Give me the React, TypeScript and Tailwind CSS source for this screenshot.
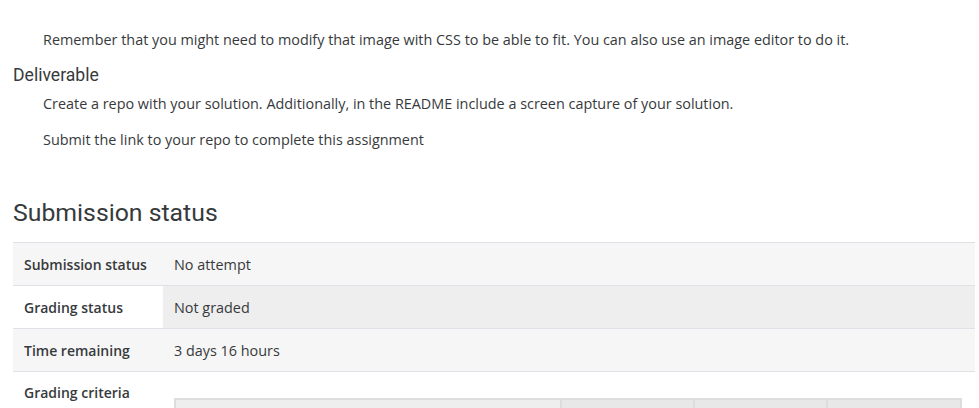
const rows = [
  { label: "Submission status", value: "No attempt", labelBg: "bg-[#f6f6f6]", valueBg: "bg-[#f6f6f6]" },
  { label: "Grading status", value: "Not graded", labelBg: "bg-white", valueBg: "bg-[#eeeeee]" },
  { label: "Time remaining", value: "3 days 16 hours", labelBg: "bg-[#f6f6f6]", valueBg: "bg-[#f6f6f6]" },
];

export default function App() {
  return (
    <div className="w-[979px] h-[408px] overflow-hidden bg-white text-[#373a3c] font-['Open_Sans',sans-serif] pl-[13px]">
      <div className="pt-[29px] pl-[30px] text-[14.4px] leading-[22px]">
        Remember that you might need to modify that image with CSS to be able to fit. You can also use an image editor to do it.
      </div>
      <h5 className="mt-[12px] font-['Roboto',sans-serif] text-[17.6px] leading-[24px] text-[#373a3c]">
        Deliverable
      </h5>
      <div className="pl-[30px] text-[14.4px] leading-[22px]">
        <p className="mt-[6px]">
          Create a repo with your solution. Additionally, in the README include a screen capture of your solution.
        </p>
        <p className="mt-[14px]">Submit the link to your repo to complete this assignment</p>
      </div>
      <h3 className="mt-[46px] font-['Roboto',sans-serif] text-[24.8px] leading-[32px]">Submission status</h3>
      <div className="mt-[13px] w-[962px] border-t border-[#dee2e6] text-[14px]">
        {rows.map((r) => (
          <div key={r.label} className="flex h-[43px] border-b border-[#dee2e6]">
            <div className={`w-[150px] shrink-0 pl-[11px] flex items-center font-semibold ${r.labelBg}`}>
              {r.label}
            </div>
            <div className={`flex-1 pl-[11px] pt-px flex items-center text-[14.4px] ${r.valueBg}`}>{r.value}</div>
          </div>
        ))}
        <div className="flex">
          <div className="w-[150px] shrink-0 pl-[11px] pt-[11px] font-semibold leading-[20px]">Grading criteria</div>
          <div className="flex-1 pl-[11px] pt-[26px]">
            <div className="flex w-[788px] h-[20px] border-t-2 border-l-2 border-r-2 border-[#dddddd]">
              <div className="w-[386px] bg-[#eeeeee] border-r-2 border-[#dddddd]" />
              <div className="w-[133px] bg-[#e8e8e8] border-r-2 border-[#dddddd]" />
              <div className="w-[133px] bg-[#e8e8e8] border-r-2 border-[#dddddd]" />
              <div className="flex-1 bg-[#e8e8e8]" />
            </div>
          </div>
        </div>
      </div>
    </div>
  );
}
